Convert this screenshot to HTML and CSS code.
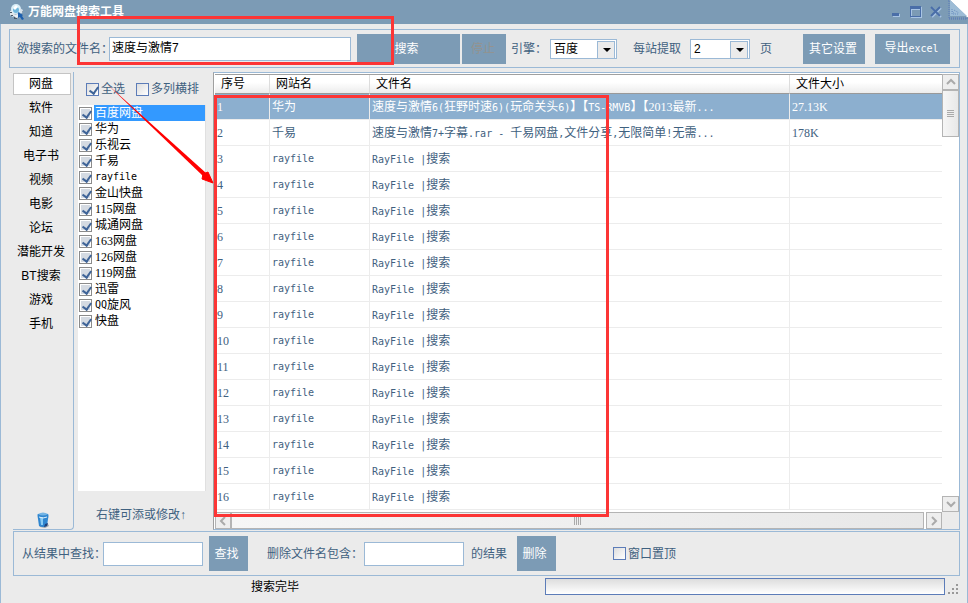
FILE: index.html
```html
<!DOCTYPE html>
<html lang="zh-CN">
<head>
    <meta charset="UTF-8">
    <title>万能网盘搜索工具</title>
    <link rel="stylesheet" href="styles.css">
</head>
<body>
    <header class="titlebar">
        <svg class="logo" width="16" height="16" viewBox="0 0 16 16">
            <path d="M1 7l3-1 2 4-2 3-3-2z" fill="#dfe6ea"/>
            <path d="M1 8h2v1H1zM2 11h2v1H2zM5 13h3v2H5zM12 7h2v1h-2z" fill="#4c5a68"/>
            <path d="M4 11l3 3 4-1-2-3z" fill="#e9eef2"/>
            <circle cx="7" cy="5" r="5" fill="#d9eef8"/>
            <circle cx="7" cy="6" r="3" fill="#6fb7dd"/>
            <path d="M4 4l3-3 2 2-3 3z" fill="#fff"/>
            <path d="M11 4l3 2-1 3-2 1z" fill="#d4e0ea"/>
            <path d="M9 8l5 3-1 1 2 3-2 1-2-3-2 1z" fill="#1c5fae"/>
        </svg>
        <h1>万能网盘搜索工具</h1>
        <div class="window-buttons">
            <button aria-label="最小化"><svg width="10" height="12" viewBox="0 0 10 12"><path d="M1 8h7v3H1z" fill="#a8c4e4"/><path d="M0 7h7v3H0z" fill="#4a6ea8"/></svg></button>
            <button aria-label="最大化"><svg width="12" height="12" viewBox="0 0 12 12"><path d="M1 1h11v11H1zM2 4v7h9V4z" fill="#a8c4e4" fill-rule="evenodd"/><path d="M0 0h11v11H0zM1 3v7h9V3z" fill="#4a6ea8" fill-rule="evenodd"/></svg></button>
            <button aria-label="关闭"><svg width="12" height="12" viewBox="0 0 12 12"><path d="M2 2l9 9M11 2l-9 9" stroke="#a8c4e4" stroke-width="2"/><path d="M1 1l9 9M10 1l-9 9" stroke="#4a6ea8" stroke-width="2"/></svg></button>
        </div>
        <svg class="curl" width="20" height="20" viewBox="0 0 20 20">
            <path d="M2 0h18v17h-1z" fill="#fff"/>
            <path d="M2 0v16h17z" fill="#9dbcd6"/>
            <path d="M0 0h1v19h18v-1H1" fill="none" stroke="#5878b8" stroke-dasharray="1 1"/>
            <path d="M4 9v5h7M4 11l3 3M6 10l5 3" fill="none" stroke="#6b8fc0" stroke-dasharray="1 1"/>
        </svg>
    </header>

    <div class="window">
        <form class="toolbar">
            <label for="keyword">欲搜索的文件名：</label>
            <input type="text" id="keyword" class="keyword" value="速度与激情7">
            <button type="button" class="btn btn-search">搜索</button>
            <button type="button" class="btn btn-stop" disabled>停止</button>
            <label for="engine" class="engine-label">引擎：</label>
            <span class="select engine"><select id="engine"><option>百度</option></select></span>
            <label for="pages" class="pages-label">每站提取</label>
            <span class="select pages"><select id="pages"><option>2</option></select></span>
            <span class="unit">页</span>
            <button type="button" class="btn btn-setting">其它设置</button>
            <button type="button" class="btn btn-export">导出<span class="en">excel</span></button>
        </form>

        <main class="main">
            <nav class="tabs">
                <button class="active">网盘</button>
                <button>软件</button>
                <button>知道</button>
                <button>电子书</button>
                <button>视频</button>
                <button>电影</button>
                <button>论坛</button>
                <button>潜能开发</button>
                <button>BT搜索</button>
                <button>游戏</button>
                <button>手机</button>
                <svg class="trash" width="14" height="16" viewBox="0 0 14 16">
                    <path d="M3 13l9-1 1 2-4 2-5-1z" fill="#a0a4a8"/>
                    <path d="M2 7q-1-5 0-5h10q1 1 0 5l-1 7q-4 2-8 0z" fill="#2f86d0"/>
                    <path d="M4 5l1 8h2V5z" fill="#8accf4"/>
                    <path d="M2 2q5-3 10 0-5 3-10 0z" fill="#74b4e4"/>
                    <path d="M3 5q4 2 8 0" fill="none" stroke="#dff0fa"/>
                    <path d="M9 12l3-1-1 3-3 1z" fill="#1d3f7a"/>
                </svg>
            </nav>

            <section class="sites">
                <div class="site-options">
                    <label><input type="checkbox" checked>全选</label>
                    <label><input type="checkbox">多列横排</label>
                </div>
                <ul class="site-list">
                    <li class="selected"><label><input type="checkbox" checked><span>百度网盘</span></label></li>
                    <li><label><input type="checkbox" checked><span>华为</span></label></li>
                    <li><label><input type="checkbox" checked><span>乐视云</span></label></li>
                    <li><label><input type="checkbox" checked><span>千易</span></label></li>
                    <li><label><input type="checkbox" checked><span class="en">rayfile</span></label></li>
                    <li><label><input type="checkbox" checked><span>金山快盘</span></label></li>
                    <li><label><input type="checkbox" checked><span class="num">115网盘</span></label></li>
                    <li><label><input type="checkbox" checked><span>城通网盘</span></label></li>
                    <li><label><input type="checkbox" checked><span class="num">163网盘</span></label></li>
                    <li><label><input type="checkbox" checked><span class="num">126网盘</span></label></li>
                    <li><label><input type="checkbox" checked><span class="num">119网盘</span></label></li>
                    <li><label><input type="checkbox" checked><span>迅雷</span></label></li>
                    <li><label><input type="checkbox" checked><span><b class="en">QQ</b>旋风</span></label></li>
                    <li><label><input type="checkbox" checked><span>快盘</span></label></li>
                </ul>
                <p class="tip">右键可添或修改↑</p>
            </section>

            <section class="results">
                <div class="table-wrap">
                    <table>
                        <colgroup><col class="c-no"><col class="c-site"><col class="c-name"><col></colgroup>
                        <thead>
                            <tr><th>序号</th><th>网站名</th><th>文件名</th><th>文件大小</th></tr>
                        </thead>
                        <tbody>
                            <tr class="selected"><td class="num">1</td><td>华为</td><td>速度与激情<span class="en">6(</span>狂野时速<span class="en">6)(</span>玩命关头<span class="en">6)</span>】【<span class="en">TS-RMVB</span>】【<span class="num">2013</span>最新<span class="en">...</span></td><td class="num">27.13K</td></tr>
                            <tr><td class="num">2</td><td>千易</td><td>速度与激情<span class="en">7+</span>字幕<span class="en">.rar - </span>千易网盘<span class="en">,</span>文件分享<span class="en">,</span>无限简单<span class="en">!</span>无需<span class="en">...</span></td><td class="num">178K</td></tr>
                            <tr><td class="num">3</td><td class="en">rayfile</td><td><span class="en">RayFile |</span>搜索</td><td></td></tr>
                            <tr><td class="num">4</td><td class="en">rayfile</td><td><span class="en">RayFile |</span>搜索</td><td></td></tr>
                            <tr><td class="num">5</td><td class="en">rayfile</td><td><span class="en">RayFile |</span>搜索</td><td></td></tr>
                            <tr><td class="num">6</td><td class="en">rayfile</td><td><span class="en">RayFile |</span>搜索</td><td></td></tr>
                            <tr><td class="num">7</td><td class="en">rayfile</td><td><span class="en">RayFile |</span>搜索</td><td></td></tr>
                            <tr><td class="num">8</td><td class="en">rayfile</td><td><span class="en">RayFile |</span>搜索</td><td></td></tr>
                            <tr><td class="num">9</td><td class="en">rayfile</td><td><span class="en">RayFile |</span>搜索</td><td></td></tr>
                            <tr><td class="num">10</td><td class="en">rayfile</td><td><span class="en">RayFile |</span>搜索</td><td></td></tr>
                            <tr><td class="num">11</td><td class="en">rayfile</td><td><span class="en">RayFile |</span>搜索</td><td></td></tr>
                            <tr><td class="num">12</td><td class="en">rayfile</td><td><span class="en">RayFile |</span>搜索</td><td></td></tr>
                            <tr><td class="num">13</td><td class="en">rayfile</td><td><span class="en">RayFile |</span>搜索</td><td></td></tr>
                            <tr><td class="num">14</td><td class="en">rayfile</td><td><span class="en">RayFile |</span>搜索</td><td></td></tr>
                            <tr><td class="num">15</td><td class="en">rayfile</td><td><span class="en">RayFile |</span>搜索</td><td></td></tr>
                            <tr><td class="num">16</td><td class="en">rayfile</td><td><span class="en">RayFile |</span>搜索</td><td></td></tr>
                        </tbody>
                    </table>
                </div>
                <div class="vscroll">
                    <button aria-label="向上"><svg width="10" height="8" viewBox="0 0 10 8"><path d="M1 6l4-4 4 4" fill="none" stroke="#aaa" stroke-width="2"/></svg></button>
                    <div class="thumb"><i></i></div>
                    <button class="down" aria-label="向下"><svg width="10" height="8" viewBox="0 0 10 8"><path d="M1 2l4 4 4-4" fill="none" stroke="#aaa" stroke-width="2"/></svg></button>
                </div>
                <div class="hscroll">
                    <button aria-label="向左"><svg width="8" height="10" viewBox="0 0 8 10"><path d="M6 1L2 5l4 4" fill="none" stroke="#aaa" stroke-width="2"/></svg></button>
                    <div class="thumb"><i></i></div>
                    <button aria-label="向右"><svg width="8" height="10" viewBox="0 0 8 10"><path d="M2 1l4 4-4 4" fill="none" stroke="#aaa" stroke-width="2"/></svg></button>
                </div>
                <div class="corner"></div>
            </section>
        </main>

        <form class="filter">
            <label for="find">从结果中查找：</label>
            <input type="text" id="find">
            <button type="button" class="btn">查找</button>
            <label for="remove" class="remove-label">删除文件名包含：</label>
            <input type="text" id="remove">
            <span class="after">的结果</span>
            <button type="button" class="btn">删除</button>
            <label class="topmost"><input type="checkbox">窗口置顶</label>
        </form>

        <footer class="status">
            <span>搜索完毕</span>
            <div class="progress"></div>
            <svg width="12" height="12" viewBox="0 0 12 12"><path d="M9 1h2v2H9zM9 5h2v2H9zM5 5h2v2H5zM9 9h2v2H9zM5 9h2v2H5zM1 9h2v2H1z" fill="#999"/></svg>
        </footer>
    </div>

    <!-- 标注 -->
    <div class="mark mark-input"></div>
    <div class="mark mark-result"></div>
    <svg class="arrow" width="110" height="104" viewBox="0 0 110 104">
        <path d="M2 1L101 90 98 93z" fill="#f00"/>
        <path d="M108 100L103 89 98 91 97 96z" fill="#f00" stroke="#f00"/>
    </svg>
</body>
</html>
```

FILE: styles.css
```css
* {
    box-sizing: border-box;
}
body {
    margin: 0;
    min-height: 100vh;
    display: flex;
    flex-direction: column;
    position: relative;
    background: #ebebeb;
    color: #3f6180;
    font: 12px/16px "Liberation Sans", "Noto Sans CJK SC", sans-serif;
}
button, input, select {
    font: inherit;
    color: inherit;
    margin: 0;
    padding: 0;
}
button {
    border: 0;
    background: none;
    white-space: nowrap;
}
label, span {
    white-space: nowrap;
}
.en {
    font-family: "DejaVu Sans Mono", monospace;
    font-size: 10px;
    font-weight: normal;
    white-space: pre;
}
.num {
    font-family: "Liberation Serif", "Noto Sans CJK SC", serif;
}

/* 标题栏 */
.titlebar {
    height: 24px;
    padding-left: 9px;
    display: flex;
    align-items: center;
    background: #7c9bb5;
}
.titlebar h1 {
    margin: 0 0 0 3px;
    font-size: 12px;
    color: #fff;
}
.window-buttons {
    margin-left: auto;
    display: flex;
    gap: 8px;
}
.window-buttons button, .window-buttons svg {
    display: block;
}
.curl {
    align-self: flex-start;
    margin-left: 6px;
}

.window {
    flex: 1;
    display: flex;
    flex-direction: column;
    padding: 5px 7px 0;
    border: solid #9bb9d6;
    border-width: 0 1px;
}

/* 搜索栏 */
.toolbar {
    height: 39px;
    padding: 0 9px 0 7px;
    display: flex;
    align-items: center;
    border: 1px solid #9bb9d6;
    margin-left: 1px;
}
input[type="text"] {
    height: 24px;
    width: 100px;
    padding: 0 2px;
    border: 1px solid #9bb9d6;
    background: #fff;
    color: #000;
}
.toolbar label:first-child {
    width: 92px;
}
.toolbar .keyword {
    width: 242px;
    padding-bottom: 4px;
}
.btn {
    height: 30px;
    background: #7c9bb5;
    color: #fff;
}
.btn-search {
    width: 103px;
    margin: 0 2px 0 6px;
    padding-right: 4px;
}
.btn-stop {
    width: 44px;
    padding-right: 2px;
    color: #93938f;
}
.engine-label {
    width: 39px;
    margin-left: 5px;
}
.select {
    position: relative;
    height: 20px;
}
.select select {
    appearance: none;
    display: block;
    width: 100%;
    height: 20px;
    padding-left: 3px;
    border: 1px solid #9bb9d6;
    border-radius: 0;
    background: #fff;
    color: #000;
}
.select::before {
    content: "";
    position: absolute;
    top: 2px;
    right: 2px;
    width: 16px;
    height: 16px;
    border: 1px solid #9bb9d6;
    background: #ebebeb;
    pointer-events: none;
}
.select::after {
    content: "";
    position: absolute;
    top: 9px;
    right: 6px;
    border: 4px solid transparent;
    border-top-color: #000;
    border-bottom: 0;
    pointer-events: none;
}
.engine {
    width: 67px;
}
.pages-label {
    margin: 0 9px 0 16px;
}
.pages {
    width: 60px;
}
.unit {
    margin-left: 10px;
}
.btn-setting {
    width: 62px;
    margin-left: auto;
    margin-right: 10px;
    padding-right: 2px;
}
.btn-export {
    width: 75px;
    padding-right: 2px;
}

.main {
    flex: 1;
    display: flex;
    padding: 4px 0 1px 5px;
}

/* 左侧分类 */
.tabs {
    width: 61px;
    padding: 1px 2px 0 0;
    display: flex;
    flex-direction: column;
    gap: 2px;
    border: solid #9bb9d6;
    border-width: 0 1px 1px 0;
    border-bottom-right-radius: 4px;
}
.tabs button {
    height: 22px;
    padding-right: 2px;
    color: #000;
}
.tabs .active {
    background: #fff;
    border: 1px solid #c4c4c4;
}
.trash {
    margin: auto 0 1px 23px;
}

/* 网站列表 */
.sites {
    width: 139px;
    padding: 9px 7px 0 4px;
    display: flex;
    flex-direction: column;
}
.site-options {
    display: flex;
    gap: 11px;
    padding-left: 8px;
    height: 24px;
}
.site-options label, .site-list label, .topmost {
    display: flex;
    align-items: center;
    height: 16px;
}
input[type="checkbox"] {
    appearance: none;
    flex: none;
    width: 13px;
    height: 13px;
    margin-right: 2px;
    border: 1px solid #5c7cb8;
    background: linear-gradient(135deg, #ddd, #fff);
}
input[type="checkbox"]:checked::before {
    content: "";
    display: block;
    width: 4px;
    height: 7px;
    margin: 1px 0 0 4px;
    border: solid #3f6498;
    border-width: 0 2px 2px 0;
    transform: rotate(35deg);
}
.site-list {
    flex: 1;
    margin: 0;
    padding: 0 0 0 1px;
    list-style: none;
    background: #fff;
    color: #000;
    border-right: 1px solid #e0e0e0;
}
.site-list input[type="checkbox"] {
    border-color: #8b8b8b;
    box-shadow: inset 0 0 0 1px #fff;
    background: #d4dae2;
}
.site-list label > span {
    flex: 1;
    padding-left: 1px;
}
.site-list b {
    vertical-align: top;
}
.selected > label > span {
    background: #3399ff;
    color: #fff;
}
.tip {
    margin: 0;
    padding: 16px 0 7px 18px;
    white-space: nowrap;
}

/* 结果表格 */
.results {
    flex: 1;
    min-width: 0;
    display: grid;
    grid-template-columns: 1fr 17px;
    grid-template-rows: 1fr 17px;
    border: 1px solid #9bb9d6;
    border-left-color: #a0a0a0;
    padding: 1px 0 0 1px;
    background: #fff;
}
.table-wrap {
    min-width: 0;
    overflow: hidden;
    border-top: 1px solid #a0a0a0;
}
table {
    width: 100%;
    table-layout: fixed;
    border-collapse: separate;
    border-spacing: 0;
}
.c-no {
    width: 55px;
}
.c-site {
    width: 100px;
}
.c-name {
    width: 420px;
}
th {
    height: 19px;
    padding: 0 6px;
    text-align: left;
    font-weight: normal;
    color: #000;
    background: linear-gradient(#fff 40%, #ececec);
    border-right: 1px solid #ddd;
    border-bottom: 1px solid #999;
}
td {
    height: 26px;
    padding: 1px 1px 0 2px;
    white-space: nowrap;
    overflow: hidden;
    border-right: 1px solid #ececec;
    border-bottom: 1px solid #ececec;
}
th:last-child, td:last-child {
    border-right: 0;
}
tr.selected td {
    background: #8cafcf;
    color: #fff;
}

/* 滚动条 */
.vscroll, .hscroll {
    display: flex;
    background: #fff;
}
.vscroll {
    flex-direction: column;
}
.corner {
    background: #ebebeb;
}
.vscroll button, .hscroll button {
    width: 17px;
    height: 16px;
    display: flex;
    align-items: center;
    justify-content: center;
    border: 1px solid #b4b4b4;
    background: #eee;
}
.hscroll button {
    width: 16px;
    height: 17px;
}
.vscroll .down {
    margin-top: auto;
}
.thumb {
    display: flex;
    align-items: center;
    justify-content: center;
    border: 1px solid #b4b4b4;
    background: linear-gradient(90deg, #f6f6f6, #e8e8e8);
}
.vscroll .thumb {
    height: 47px;
}
.vscroll .thumb i {
    width: 7px;
    height: 7px;
    background: repeating-linear-gradient(#aaa 0 1px, #eee 1px 2px);
}
.hscroll .thumb {
    flex: 1;
    margin-right: 2px;
}
.hscroll .thumb i {
    width: 8px;
    height: 8px;
    background: repeating-linear-gradient(90deg, #aaa 0 1px, #eee 1px 2px);
}

/* 底部过滤 */
.filter {
    height: 45px;
    margin-left: 5px;
    padding-left: 8px;
    display: flex;
    align-items: center;
    border: 1px solid #9bb9d6;
}
.filter label:first-child {
    width: 81px;
}
.filter .btn {
    width: 39px;
    height: 35px;
    margin-left: 6px;
    padding-right: 4px;
}
.filter .remove-label {
    width: 97px;
    margin-left: 19px;
}
.filter .after {
    margin: 0 4px 0 7px;
}
.topmost {
    margin-left: 57px;
}

.status {
    height: 27px;
    padding: 2px 1px 0 243px;
    display: flex;
}
.status span {
    width: 294px;
    padding-top: 1px;
    color: #000;
}
.progress {
    flex: 1;
    height: 17px;
    border: 1px solid #5c7cb8;
    background: linear-gradient(#ddd, #fff);
}
.status svg {
    margin: 5px 0 0 2px;
}

/* 红框和箭头 */
.mark {
    position: absolute;
    border: 3px solid #fc3535;
    pointer-events: none;
}
.mark-input {
    left: 77px;
    top: 16px;
    width: 317px;
    height: 49px;
}
.mark-result {
    left: 214px;
    top: 95px;
    width: 395px;
    height: 422px;
}
.arrow {
    position: absolute;
    left: 105px;
    top: 83px;
    pointer-events: none;
}
```
